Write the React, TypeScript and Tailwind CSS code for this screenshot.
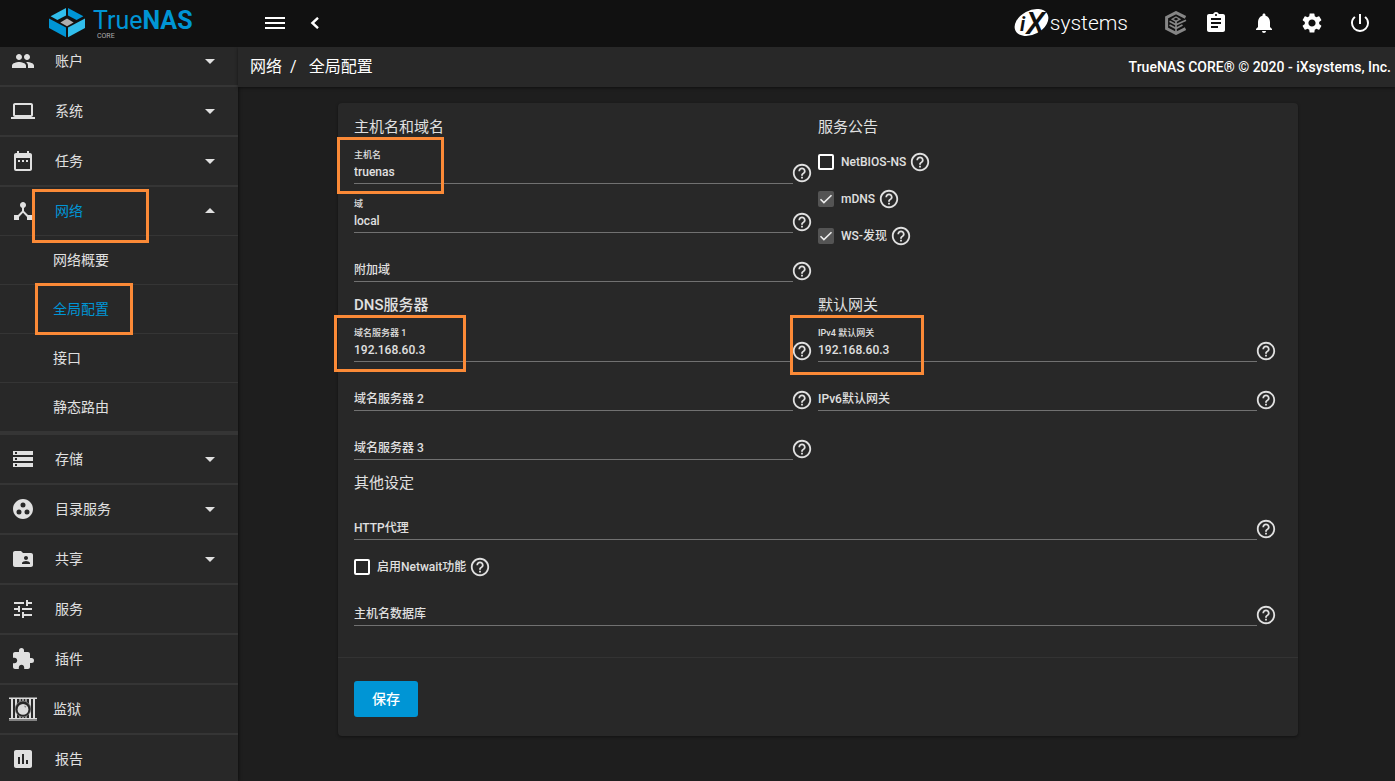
import React, { useState } from 'react';
import {
  MdPeople,
  MdLaptop,
  MdDateRange,
  MdDeviceHub,
  MdStorage,
  MdGroupWork,
  MdFolderShared,
  MdTune,
  MdExtension,
  MdAssessment,
  MdHelpOutline,
  MdArrowDropDown,
  MdArrowDropUp,
  MdAssignment,
  MdNotifications,
  MdSettings,
  MdPowerSettingsNew,
} from 'react-icons/md';

const JailIcon: React.FC = () => (
  <svg width="28" height="24" viewBox="0 0 28 24">
    <g fill="#dcdcdc">
      <rect x="0" y="0" width="28" height="2" opacity="0.5" />
      <rect x="0" y="1" width="28" height="1" />
      <rect x="0" y="21" width="28" height="1" />
      <rect x="0" y="22" width="28" height="2" opacity="0.5" />
      <rect x="2" y="2" width="2" height="19" />
      <rect x="6" y="2" width="2" height="19" />
      <rect x="20" y="2" width="2" height="19" />
      <rect x="24" y="2" width="2" height="19" />
      <rect x="10" y="2" width="2" height="19" opacity="0.6" />
      <rect x="13" y="2" width="2" height="19" opacity="0.6" />
      <rect x="16" y="2" width="2" height="19" opacity="0.6" />
    </g>
    <circle cx="14" cy="12" r="8.2" fill="#777777" />
    <circle cx="14" cy="12" r="7.4" fill="#282828" />
    <circle cx="14" cy="12.4" r="5.4" fill="#dcdcdc" />
    <path d="M15 8.8l2.4.2-1.2 2z" fill="#8a8a8a" />
  </svg>
);

const TrueNasMark: React.FC = () => (
  <svg width="36" height="30" viewBox="0 0 36 30">
    <path d="M17 0v7.6L8.4 12 1.6 8.2z" fill="#31beec" />
    <path d="M19 0v7.6l8.6 4.4 6.8-3.8z" fill="#0095d5" />
    <path d="M0 10.4l17 9v9.8L0 20z" fill="#0095d5" />
    <path d="M36 10.4l-17 9v9.8L36 20z" fill="#31beec" />
    <path d="M18 10.4l6.6 4-6.6 3.8-6.6-3.8z" fill="#aeadae" />
  </svg>
);

const IxMark: React.FC = () => (
  <svg width="35" height="28" viewBox="0 0 35 28" className="overflow-visible">
    <ellipse cx="17.5" cy="13.5" rx="18" ry="12" transform="rotate(-28 17.5 13.5)" fill="#ffffff" />
    <text x="6" y="22" fontSize="20" fontWeight="700" fontStyle="italic" fontFamily="Roboto, sans-serif" fill="#111111">
      i
    </text>
    <text x="12" y="25" fontSize="31" fontWeight="500" fontStyle="italic" fontFamily="Roboto, sans-serif" fill="#111111">
      X
    </text>
  </svg>
);

const TrueCommandIcon: React.FC = () => (
  <svg width="22" height="24" viewBox="0 0 22 24" fill="none" stroke="#868686">
    <path d="M20.5 6.4L11 1.6 1.6 6.4v11.2L11 22.4l9.5-4.8" strokeWidth="3" />
    <path d="M11 6l3.8 2.2L11 10.4 7.2 8.2z" strokeWidth="1.4" />
    <path d="M4.5 10.2l6.5 3.6 10-4.6M4.5 14l6.5 3.6 6.5-3.6M11 10v12" strokeWidth="1.7" />
  </svg>
);

const Highlight: React.FC<{ className: string }> = ({ className }) => (
  <span className={`absolute z-10 pointer-events-none border-3 border-[#fb8a37] ${className}`} />
);

const menuItems = [
  { label: '账户', icon: MdPeople, expandable: true },
  { label: '系统', icon: MdLaptop, expandable: true },
  { label: '任务', icon: MdDateRange, expandable: true },
  { label: '网络', icon: MdDeviceHub, expandable: true, children: ['网络概要', '全局配置', '接口', '静态路由'] },
  { label: '存储', icon: MdStorage, expandable: true },
  { label: '目录服务', icon: MdGroupWork, expandable: true },
  { label: '共享', icon: MdFolderShared, expandable: true },
  { label: '服务', icon: MdTune },
  { label: '插件', icon: MdExtension },
  { label: '监狱', icon: null },
  { label: '报告', icon: MdAssessment },
];

const Sidebar: React.FC = () => (
  <nav className="w-[238px] shrink-0 overflow-hidden bg-[#282828] shadow-[1px_0_3px_rgba(0,0,0,0.5)]">
    {/* The list is scrolled a little under the top bar */}
    <ul className="-mt-2.5">
      {menuItems.map(({ label, icon: Icon, expandable, children }) => (
        <li key={label} className={children ? 'border-b-4 border-[#353535]' : 'border-b-2 border-[#353535]'}>
          <a href="#" className="relative flex h-12 items-center pl-[11px] pr-4">
            {Icon ? (
              <>
                <Icon size={24} className="mr-5 shrink-0" />
                <span className={children ? 'flex-1 text-[#0095d5]' : 'flex-1'}>{label}</span>
              </>
            ) : (
              <>
                <span className="-ml-0.5 mr-4 shrink-0"><JailIcon /></span>
                <span className="flex-1">{label}</span>
              </>
            )}
            {expandable && (children ? <MdArrowDropUp size={24} /> : <MdArrowDropDown size={24} />)}
            {children && <Highlight className="left-8 top-0.5 h-[54px] w-[117px]" />}
          </a>
          {children && (
            <ul>
              {children.map((child) => (
                <li key={child} className="border-t border-[#353535]">
                  <a
                    href="#"
                    className={`relative flex h-12 items-center pl-[53px] ${child === '全局配置' ? 'text-[#0095d5]' : ''}`}
                  >
                    {child}
                    {child === '全局配置' && <Highlight className="left-[35px] -top-0.5 h-[52px] w-[98px]" />}
                  </a>
                </li>
              ))}
            </ul>
          )}
        </li>
      ))}
    </ul>
  </nav>
);

const TopBar: React.FC = () => (
  <header className="relative z-20 flex h-[47px] shrink-0 items-center bg-[#111111] pb-px text-white">
    <a href="#" className="flex h-full w-[238px] shrink-0 items-start pl-[49px] pt-2" aria-label="TrueNAS CORE">
      <TrueNasMark />
      <span className="ml-2 flex flex-col">
        <span className="text-[25px] leading-[26px] text-[#0095d5]">
          True<b>NAS</b>
        </span>
        <span className="pl-1 text-[7px] leading-1 text-[#aeadae]">CORE</span>
      </span>
    </a>
    <button aria-label="Toggle menu" className="ml-[27px]">
      <svg width="20" height="12" viewBox="0 0 20 12" fill="#ffffff">
        <path d="M0 0h20v2H0zM0 5h20v2H0zM0 10h20v2H0z" />
      </svg>
    </button>
    <button aria-label="Collapse menu" className="ml-[25px]">
      <svg width="9" height="12" viewBox="0 0 9 12" fill="none" stroke="#ffffff" strokeWidth="2.4">
        <path d="M8 .8L2.4 6 8 11.2" />
      </svg>
    </button>
    <div className="flex-1" />
    <a href="#" className="mr-[37px] flex items-center gap-px" aria-label="iXsystems">
      <IxMark />
      <span className="text-[21px] font-light leading-6">systems</span>
    </a>
    <div className="flex items-center gap-6 pr-[23px]">
      <button aria-label="TrueCommand" className="-mr-[7px]"><TrueCommandIcon /></button>
      <button aria-label="Task manager"><MdAssignment size={24} /></button>
      <button aria-label="Notifications"><MdNotifications size={24} /></button>
      <button aria-label="Settings"><MdSettings size={24} /></button>
      <button aria-label="Power"><MdPowerSettingsNew size={24} /></button>
    </div>
  </header>
);

const Help: React.FC = () => (
  <button type="button" aria-label="Help" className="flex w-[18px] shrink-0 justify-center">
    <MdHelpOutline size={22} className="shrink-0" />
  </button>
);

interface FieldProps {
  id: string;
  label: string;
  initial?: string;
  children?: React.ReactNode;
}

const Field: React.FC<FieldProps> = ({ id, label, initial = '', children }) => {
  const [value, setValue] = useState(initial);
  return (
    <div className="relative mr-[7px] flex h-[49px] items-end">
      <div className="flex min-w-0 flex-1 flex-col border-b border-[#717171]">
        {value && (
          <label htmlFor={id} className="text-[9px] leading-3">
            {label}
          </label>
        )}
        <input
          id={id}
          value={value}
          placeholder={label}
          aria-label={label}
          onChange={(e) => setValue(e.target.value)}
          className="h-[22px] w-full bg-transparent leading-5 placeholder-[#e0e0e0] outline-none"
        />
      </div>
      <Help />
      {children}
    </div>
  );
};

const Checkbox: React.FC<{ id: string; label: string; initial?: boolean }> = ({ id, label, initial = false }) => {
  const [checked, setChecked] = useState(initial);
  return (
    <div className="flex h-[37px] items-end">
      <div className="flex h-5 items-center">
        <span className="relative flex">
          <input
            id={id}
            type="checkbox"
            checked={checked}
            onChange={() => setChecked(!checked)}
            className="size-4 appearance-none rounded-xs border-2 border-white checked:border-0 checked:bg-[#545454]"
          />
          {checked && (
            <svg className="pointer-events-none absolute inset-0" width="16" height="16" viewBox="0 0 16 16">
              <path d="M2.5 8.2l3.4 3.4 7.6-7.4" fill="none" stroke="#eeeeee" strokeWidth="1.6" />
            </svg>
          )}
        </span>
        <label htmlFor={id} className="ml-[7px] mr-[5px]">{label}</label>
        <Help />
      </div>
    </div>
  );
};

const Section: React.FC<{ title: React.ReactNode; children: React.ReactNode }> = ({ title, children }) => (
  <fieldset className="min-w-0">
    <legend className="h-[31px] pt-[15px] text-[15px] font-normal leading-4">{title}</legend>
    {children}
  </fieldset>
);

const ConfigForm: React.FC = () => (
  <form className="mx-auto w-full max-w-[960px] rounded bg-[#282828] text-xs font-medium shadow-[0_1px_3px_rgba(0,0,0,0.4)]">
    <div className="px-4 pt-px">
      <div className="grid grid-cols-2">
        <Section title="主机名和域名">
          <Field id="hostname" label="主机名" initial="truenas">
            <Highlight className="-left-[17px] top-0.5 h-[57px] w-[107px]" />
          </Field>
          <Field id="domain" label="域" initial="local" />
          <Field id="domains" label="附加域" />
        </Section>
        <Section title="服务公告">
          <Checkbox id="netbios" label="NetBIOS-NS" />
          <Checkbox id="mdns" label="mDNS" initial />
          <Checkbox id="wsd" label="WS-发现" initial />
        </Section>
        <Section title={<span className="font-medium">DNS服务器</span>}>
          <Field id="nameserver1" label="域名服务器 1" initial="192.168.60.3">
            <Highlight className="-left-5 top-0.5 h-[57px] w-[132px]" />
          </Field>
          <Field id="nameserver2" label="域名服务器 2" />
          <Field id="nameserver3" label="域名服务器 3" />
        </Section>
        <Section title="默认网关">
          <Field id="ipv4gateway" label="IPv4 默认网关" initial="192.168.60.3">
            <Highlight className="-left-7 top-0.5 h-[60px] w-[134px]" />
          </Field>
          <Field id="ipv6gateway" label="IPv6默认网关" />
        </Section>
      </div>
      <Section title="其他设定">
        <Field id="httpproxy" label="HTTP代理" />
        <Checkbox id="netwait" label="启用Netwait功能" />
        <Field id="hosts" label="主机名数据库" />
      </Section>
    </div>
    <div className="mt-[31px] border-t border-[#333333] px-4 pb-[19px] pt-[23px]">
      <button type="button" className="h-9 w-16 rounded-[3px] bg-[#0095d5] text-sm font-medium text-white">
        保存
      </button>
    </div>
  </form>
);

export default function App() {
  return (
    <div className="flex h-screen flex-col overflow-hidden bg-[#1e1e1e] font-[Roboto,'Noto_Sans_CJK_SC',sans-serif] text-sm text-[#e0e0e0]">
      <TopBar />
      <div className="flex min-h-0 flex-1">
        <Sidebar />
        <main className="flex min-w-0 flex-1 flex-col">
          <div className="flex h-10 shrink-0 items-center justify-between bg-[#282828] pb-px pl-3 pr-1 text-white shadow-[0_1px_3px_rgba(0,0,0,0.5)]">
            <div className="flex gap-2 text-base">
              <a href="#">网络</a>
              <span>/</span>
              <a href="#" className="ml-1">全局配置</a>
            </div>
            <span className="font-medium">TrueNAS CORE® © 2020 - iXsystems, Inc.</span>
          </div>
          <div className="min-h-0 flex-1 overflow-y-auto py-4 pl-[19px] pr-4">
            <ConfigForm />
          </div>
        </main>
      </div>
    </div>
  );
}
